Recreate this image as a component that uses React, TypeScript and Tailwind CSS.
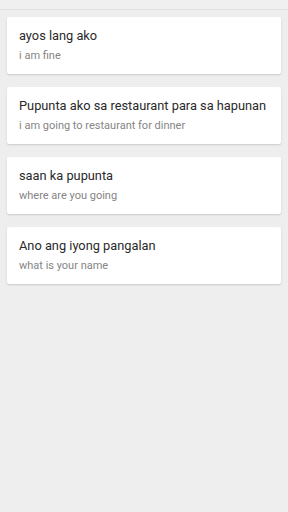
const phrases = [
  { tl: 'ayos lang ako', en: 'i am fine' },
  { tl: 'Pupunta ako sa restaurant para sa hapunan', en: 'i am going to restaurant for dinner' },
  { tl: 'saan ka pupunta', en: 'where are you going' },
  { tl: 'Ano ang iyong pangalan', en: 'what is your name' },
]

export default function App() {
  return (
    <main className="min-h-[512px] bg-[#eeeeee]" style={{ fontFamily: 'Roboto, "Noto Sans", sans-serif' }}>
      <div className="h-[10px] bg-[#f0f0f0] border-b border-[#e2e2e2]" />
      <div className="flex flex-col gap-[13px] px-[7px] pt-[7px]">
        {phrases.map((p) => (
          <div key={p.tl} className="bg-white rounded-[2px] shadow-[0_1px_2px_rgba(0,0,0,0.15)] px-3 pt-[11px] pb-[11px]">
            <p className="text-[12.8px] leading-[16px] text-[#2a2a2a] whitespace-nowrap">{p.tl}</p>
            <p className="text-[11px] leading-[14px] text-[#858585] mt-[5px]">{p.en}</p>
          </div>
        ))}
      </div>
    </main>
  )
}
